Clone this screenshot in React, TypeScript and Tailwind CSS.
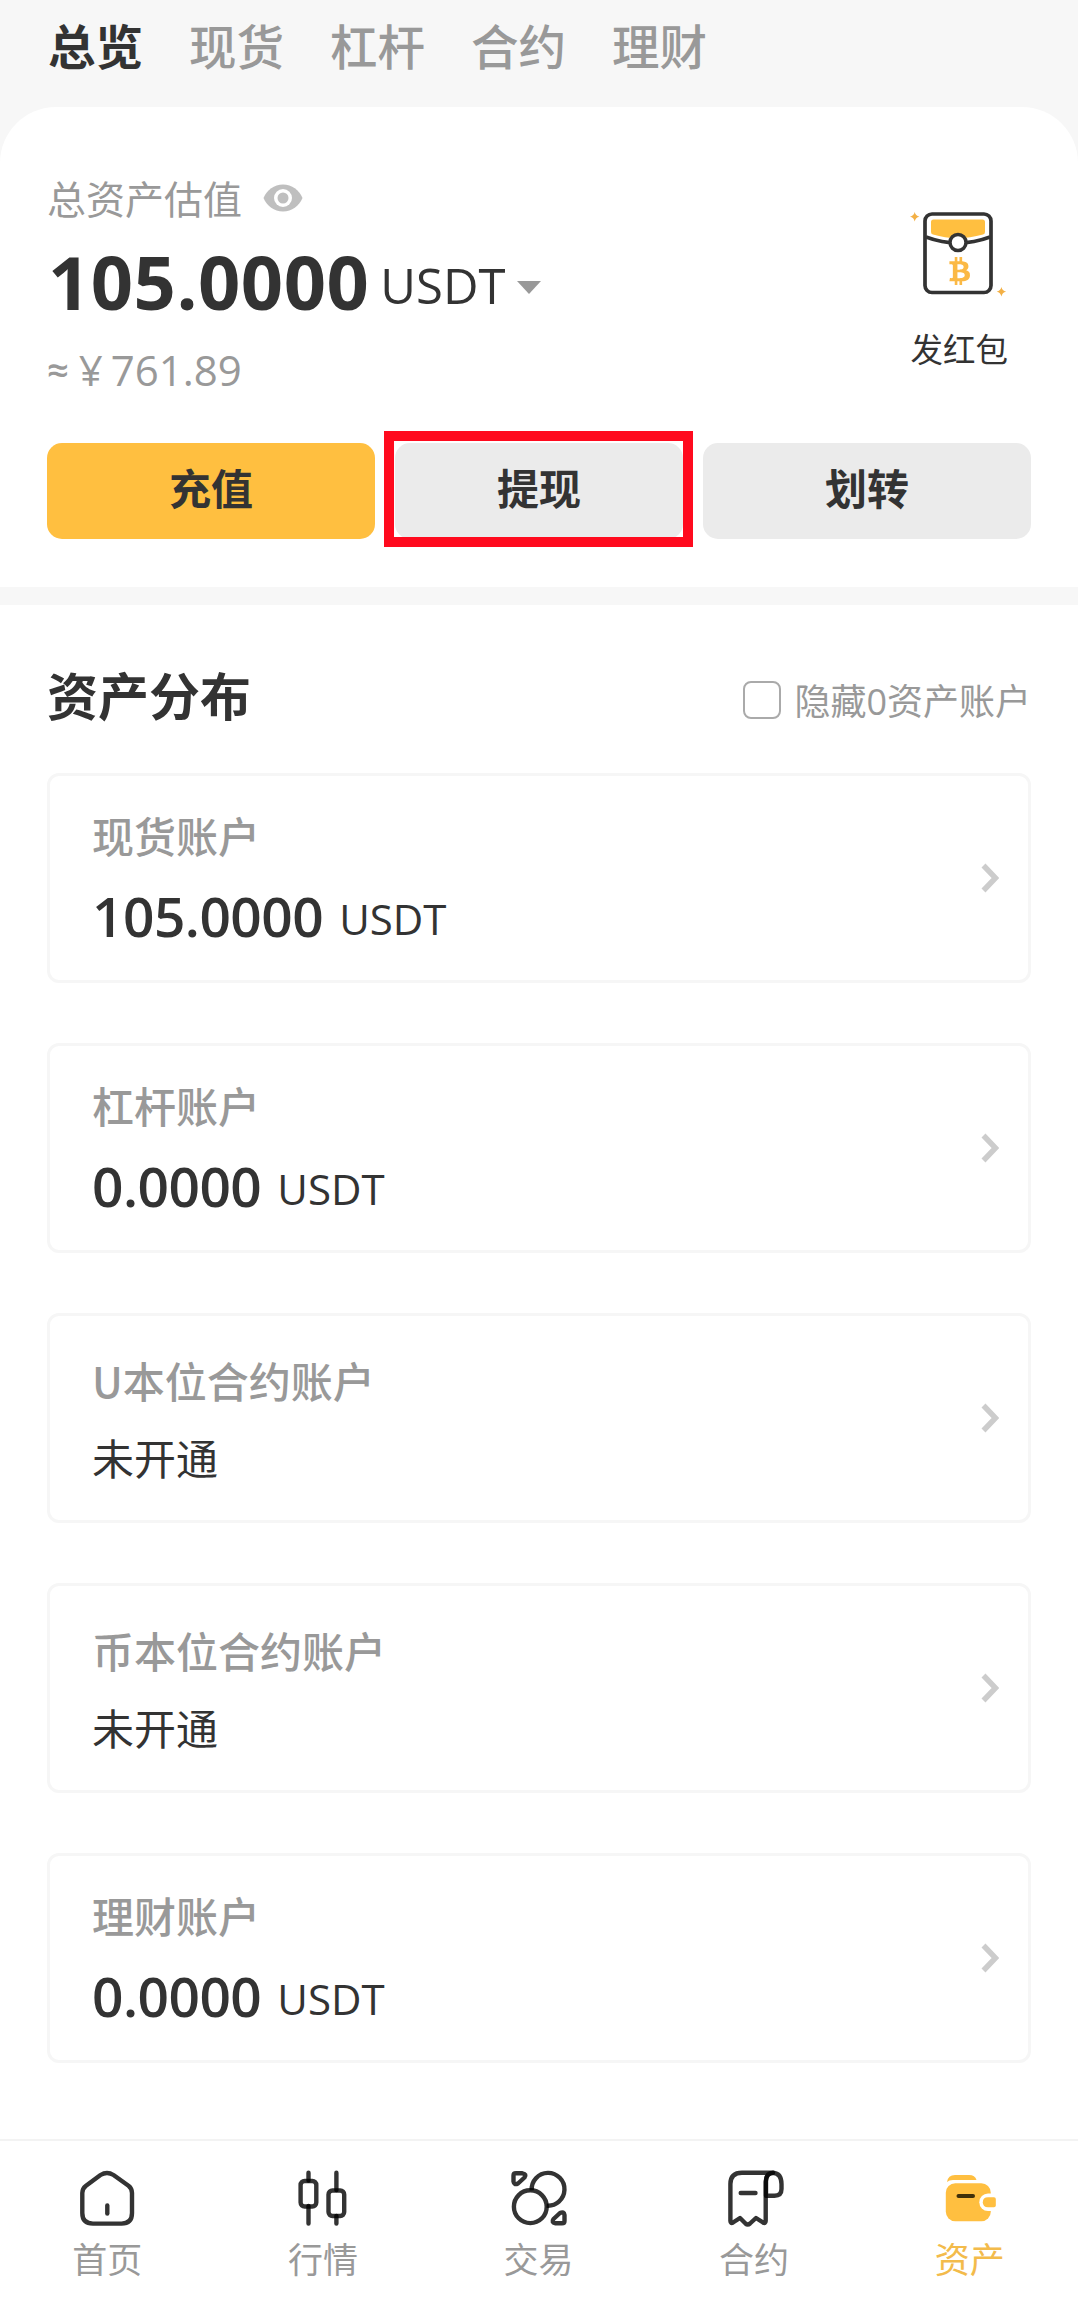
import React, { useState } from "react";
import { FaBtc } from "react-icons/fa";

interface Account {
  name: string;
  amount?: string;
}

const TABS = ["总览", "现货", "杠杆", "合约", "理财"];

const ACCOUNTS: Account[] = [
  { name: "现货账户", amount: "105.0000" },
  { name: "杠杆账户", amount: "0.0000" },
  { name: "U本位合约账户" },
  { name: "币本位合约账户" },
  { name: "理财账户", amount: "0.0000" },
];

// Outline icons use translucent black so crossing strokes get darker
const OUTLINE = {
  width: 60,
  height: 60,
  viewBox: "0 0 60 60",
  fill: "none",
  stroke: "#000",
  strokeOpacity: 0.8,
  strokeWidth: 4.4,
  strokeLinejoin: "round",
} as const;

function EyeIcon() {
  return (
    <svg width="40" height="28" viewBox="0 0 40 28">
      <path d="M0.5 14C4 6 11 0.5 20 0.5S36 6 39.5 14C36 22 29 27.5 20 27.5S4 22 0.5 14Z" fill="#bfbfbf" />
      <circle cx="20" cy="14" r="9" fill="#fff" />
      <circle cx="20" cy="14" r="5.5" fill="#bfbfbf" />
    </svg>
  );
}

function RedPacketIcon() {
  return (
    <svg className="overflow-visible" width="96" height="84" viewBox="0 0 96 84" fill="none">
      <rect x="14" y="3" width="66" height="78.5" rx="7" fill="#fff" stroke="#333" strokeWidth="3.7" />
      <path d="M20 11Q20 8.500 22.500 8.500H71.500Q74 8.500 74 11V21Q74 23 72 23.600Q46 31 22 23.600Q20 23 20 21Z" fill="#ffbf40" />
      <path d="M15 26Q47 38 79 26" stroke="#333" strokeWidth="3.5" />
      <circle cx="47" cy="31.500" r="8" fill="#fff" stroke="#333" strokeWidth="3.5" />
      <FaBtc x="34.700" y="46" size={28} color="#fbb945" />
      <path d="M3.700 1Q4.500 4.900 8.400 5.700Q4.500 6.500 3.700 10.400Q2.900 6.500 -1 5.700Q2.900 4.900 3.700 1Z" fill="#f3b045" />
      <path d="M90.400 76Q91.200 79.900 95.100 80.700Q91.200 81.500 90.400 85.400Q89.600 81.500 85.700 80.700Q89.600 79.900 90.400 76Z" fill="#f3b045" />
    </svg>
  );
}

function HomeIcon() {
  return (
    <svg {...OUTLINE} strokeLinecap="round">
      <path d="M4.300 23Q4.300 18.500 8 15.700L22.500 5Q29 1 35.500 5L50.500 15.700Q54 18.500 54 23V43Q54 53.600 43.500 53.600H15Q4.300 53.600 4.300 43Z" />
      <path d="M29.300 35.500V43.500" />
    </svg>
  );
}

function MarketIcon() {
  return (
    <svg {...OUTLINE} strokeLinecap="round">
      <rect x="7.600" y="11" width="15.700" height="25.500" rx="4" />
      <rect x="35.500" y="20.500" width="15.700" height="25.500" rx="4" />
      <path d="M15.500 2.800V10.500M15.500 36V53.500M43.400 2.800V20M43.400 46V53.500" />
    </svg>
  );
}

function TradeIcon() {
  return (
    <svg {...OUTLINE}>
      <path d="M22.700 20.400A16.400 16.400 0 1 1 37.600 35.600" />
      <circle cx="21.300" cy="36.700" r="16.400" />
      <path d="M4.500 5.500Q4.500 3.300 7 3.300H13.500Q18 4 15.500 7.500L9 13.500Q5 15.500 4.500 11.500Z" />
      <path d="M55.500 51Q55.500 53.300 53 53.300H46.500Q42 52.500 44.500 49L51 43Q55 41 55.500 45Z" />
    </svg>
  );
}

function ContractIcon() {
  return (
    <svg {...OUTLINE} strokeLinecap="round">
      <path d="M46 2.700H17Q5.400 2.700 5.400 14V51Q5.500 54 8 52.500L15 48L20.500 53.500Q22.700 55.500 25 53.500L31 48L38 52.500Q40.600 54 40.700 51V12Q40.700 2.700 48 2.700" />
      <path d="M41 25.700V11Q41.500 2.700 48 2.700Q56.500 3.500 56.500 14V19Q56.500 25.700 49.500 25.700Z" />
      <path d="M15.700 23H30.500" />
    </svg>
  );
}

function WalletIcon() {
  return (
    <svg width="60" height="60" viewBox="0 0 60 60" fill="none">
      <path d="M7 12Q8 5 15 5H29Q35 5 36.500 10H13Q9 10 7 12Z" fill="#ffbf40" />
      <rect x="5.800" y="13.300" width="45" height="38" rx="9.500" fill="#ffbf40" />
      <rect x="39.300" y="23.500" width="22" height="17.500" rx="8.700" fill="#fff" />
      <path d="M48 27.300H54Q55.800 27.300 55.800 29V35.500Q55.800 37.300 54 37.300H48Q42.800 37.300 42.800 32.300Q42.800 27.300 48 27.300Z" fill="#ffbf40" />
      <path d="M18.500 26H33" stroke="#40300a" strokeWidth="4" strokeLinecap="round" />
    </svg>
  );
}

const NAV_ITEMS = [
  { label: "首页", Icon: HomeIcon },
  { label: "行情", Icon: MarketIcon },
  { label: "交易", Icon: TradeIcon },
  { label: "合约", Icon: ContractIcon },
  { label: "资产", Icon: WalletIcon },
];

function AccountCard({ name, amount }: Account) {
  return (
    <div className="flex h-[210px] items-center justify-between rounded-[12px] border-[3px] border-[#f6f6f6] pl-[42px] pr-[29px]">
      <div className={amount ? "pt-[6px]" : "pt-[3px]"}>
        <div className="-translate-y-[1px] font-['Noto_Sans_CJK_SC',sans-serif] text-[42px] font-medium leading-[60px] text-[#999]">
          {name}
        </div>
        {amount ? (
          <div className="mt-[14px] flex items-baseline leading-[72px]">
            <span className="text-[55px] font-semibold tracking-[-0.5px]">{amount}</span>
            <span className="ml-[16px] -translate-y-[2px] text-[42px]">USDT</span>
          </div>
        ) : (
          <div className="mt-[18px] text-[42px] leading-[60px]">未开通</div>
        )}
      </div>
      <svg width="18" height="30" viewBox="0 0 18 30" fill="none" stroke="#ccc" strokeWidth="5.5">
        <path d="M2.500 2.500L14.500 15L2.500 27.500" />
      </svg>
    </div>
  );
}

export default function App() {
  const [activeTab, setActiveTab] = useState("总览");
  const [hideEmpty, setHideEmpty] = useState(false);

  return (
    <div className="flex h-[2306px] w-[1078px] flex-col overflow-hidden bg-[#f7f7f7] font-['Open_Sans','Noto_Sans_CJK_SC',sans-serif] text-[#333]">
      {/* Top tabs */}
      <div className="flex h-[107px] gap-[46px] pl-[48px] pt-[12px]">
        {TABS.map((tab) => (
          <button
            key={tab}
            onClick={() => setActiveTab(tab)}
            className={`h-[70px] text-[47.500px] leading-[70px] ${
              tab === activeTab ? "font-bold text-[#333]" : "font-medium text-[#999]"
            }`}
          >
            {tab}
          </button>
        ))}
      </div>

      {/* Balance */}
      <section className="flex h-[480px] flex-col rounded-t-[56px] bg-white px-[47px] pt-[64px]">
        <div className="flex h-[272px] justify-between">
          <div>
            <div className="flex h-[56px] items-center gap-[21px] text-[39px] text-[#999]">
              <span>总资产估值</span>
              <span className="-translate-y-[1px]">
                <EyeIcon />
              </span>
            </div>
            <div className="flex h-[110px] items-baseline pl-[1px] leading-[110px]">
              <span className="text-[74px] font-bold tracking-[0.5px]">105.0000</span>
              <span className="ml-[11px] -translate-y-[6px] text-[49px]">USDT</span>
              <svg className="ml-[12px] -translate-y-[16px]" width="24" height="13" viewBox="0 0 24 13">
                <path d="M0 0H24L12 13Z" fill="#999" />
              </svg>
            </div>
            <div className="flex h-[64px] items-center text-[42px] text-[#999]">
              <span className="text-[38px] font-semibold">≈</span>
              <span className="ml-[10px]">¥</span>
              <span className="ml-[8px]">761.89</span>
            </div>
          </div>
          <div className="flex flex-col items-center pr-[23px] pt-[40px]">
            <RedPacketIcon />
            <span className="mt-[30px] text-[32.500px] leading-[50px]">发红包</span>
          </div>
        </div>

        <div className="flex gap-[20px] text-[42px] font-bold">
          <button className="h-[96px] w-[328px] rounded-[15px] bg-[#ffbf40] pb-[5px]">充值</button>
          <div className="relative w-[288px]">
            <button className="h-[96px] w-full rounded-[15px] bg-[#ebebeb] pb-[5px]">提现</button>
            <div className="pointer-events-none absolute -left-[11px] -right-[10px] -top-[12px] h-[116px] border-[10px] border-[#ff0a1e]" />
          </div>
          <button className="h-[96px] w-[328px] rounded-[15px] bg-[#ebebeb] pb-[5px]">划转</button>
        </div>
      </section>

      {/* Accounts */}
      <section className="mt-[18px] flex-1 bg-white px-[47px] pt-[56px]">
        <div className="flex h-[72px] items-center justify-between">
          <h2 className="-translate-y-[1px] text-[51px] font-bold leading-[72px]">资产分布</h2>
          <label className="flex items-center gap-[13px] pt-[6px] text-[36px] text-[#999]">
            <input
              type="checkbox"
              checked={hideEmpty}
              onChange={() => setHideEmpty(!hideEmpty)}
              className="size-[38px] appearance-none rounded-[8px] border-[2px] border-[#aaa]"
            />
            <span className="translate-y-[2px]">隐藏0资产账户</span>
          </label>
        </div>
        <div className="mt-[40px] flex flex-col gap-[60px]">
          {ACCOUNTS.map((account) => (
            <AccountCard key={account.name} {...account} />
          ))}
        </div>
      </section>

      {/* Bottom navigation */}
      <nav className="grid h-[167px] grid-cols-5 border-t-[2px] border-[#f3f3f3] bg-white">
        {NAV_ITEMS.map(({ label, Icon }) => (
          <button key={label} className="flex flex-col items-center pt-[29px]">
            <Icon />
            <span className={`mt-[5px] pr-[1px] text-[35px] leading-[50px] ${label === "资产" ? "text-[#f3bb4b]" : "text-[#999]"}`}>
              {label}
            </span>
          </button>
        ))}
      </nav>
    </div>
  );
}
